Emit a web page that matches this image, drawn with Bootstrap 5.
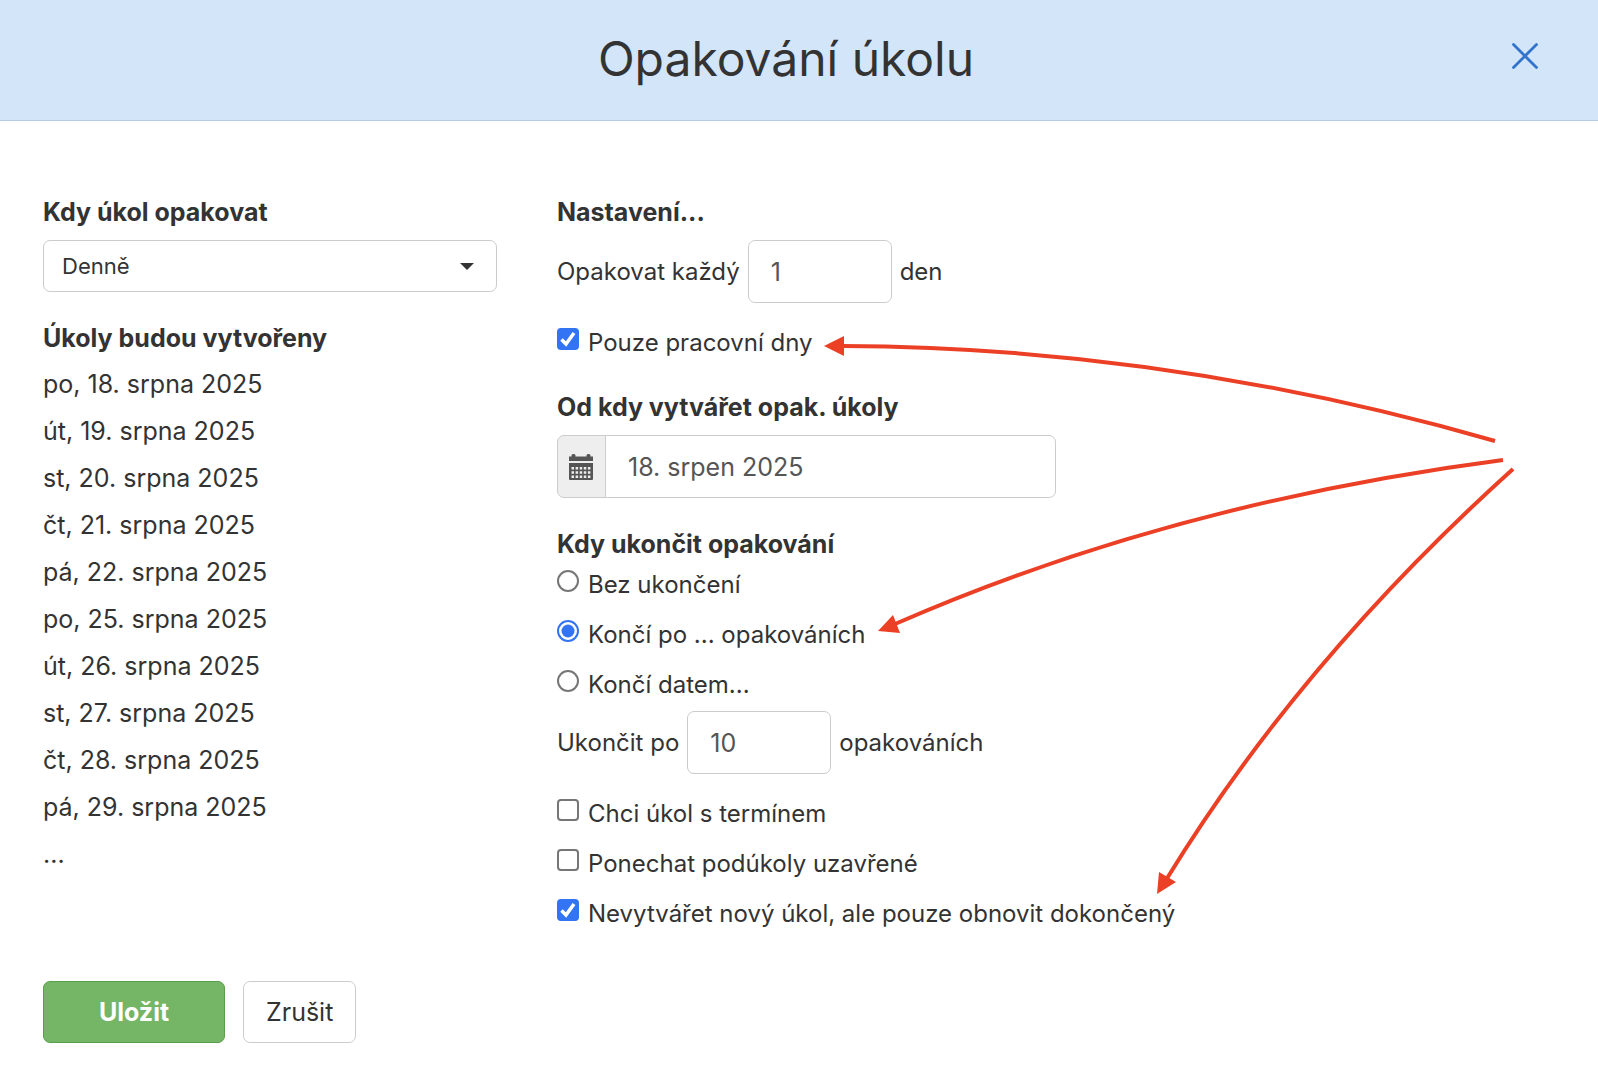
<!DOCTYPE html>
<html lang="cs">
<head>
<meta charset="utf-8">
<meta name="viewport" content="width=device-width, initial-scale=1">
<title>Opakování úkolu</title>
<link href="https://cdn.jsdelivr.net/npm/bootstrap@5.3.0/dist/css/bootstrap.min.css" rel="stylesheet">
<style>
  body { font-family: Inter, "Liberation Sans", sans-serif; font-size: 24px; line-height: 36px; color: #333; background: #fff; }
  .dialog-head { background: #d3e5f9; border-bottom: 1px solid #b3cce4; padding: 0 60px; height: 121px; }
  .dialog-title { font-size: 48px; line-height: 60px; font-weight: 400; padding-bottom: 2px; }
  .close-btn { color: #3273cb; width: 26px; height: 26px; margin-bottom: 8px; }
  .dialog-body { padding: 73px 43px 39px; }
  .columns { column-gap: 60px; }
  .schedule { width: 454px; }
  .section-title { display: block; font-size: 25px; line-height: 36px; font-weight: 700; margin-bottom: 10px; }
  .section-tight { margin-bottom: 5px; }
  .section { margin-top: 28px; }
  .form-control, .form-select, .input-group-text { border-color: #ccc; border-radius: 7px; }
  .form-control { font-size: 25px; line-height: 36px; height: 63px; padding: 0 22px; color: #555; }
  .form-select { font-size: 22px; height: 52px; padding: 0 60px 0 18px; color: #333;
    background-image: url("data:image/svg+xml,%3Csvg xmlns='http://www.w3.org/2000/svg' viewBox='0 0 14 7'%3E%3Cpath fill='%23333' d='M0 0h14L7 7z'/%3E%3C/svg%3E");
    background-size: 14px 7px; background-position: right 22px center; }
  .count-field { width: 144px; }
  .field-row { gap: 8px; }
  .date-group { width: 499px; }
  .input-group-text { width: 49px; padding: 0 2px 0 0; background: #eee; color: #555; }
  .dates { font-size: 25px; line-height: 47px; }
  .choices { gap: 14px; }
  .before-field { margin-bottom: 8px; }
  .after-field { margin-top: 22px; }
  .choice { gap: 9px; }
  .choice .form-check-input { width: 22px; height: 22px; margin: 3px 0 0; border: 2px solid #767676; }
  .choice .form-check-input[type=checkbox] { border-radius: 4px; }
  .choice .form-check-input:checked { background-color: #3374f5; border-color: #3374f5; }
  .choice .form-check-input[type=checkbox]:checked { background-size: 22px 22px;
    background-image: url("data:image/svg+xml,%3Csvg xmlns='http://www.w3.org/2000/svg' viewBox='0 0 22 22'%3E%3Cpath fill='none' stroke='%23fff' stroke-width='3.500' d='M4.500 11.500l4.500 4.500L17 5'/%3E%3C/svg%3E"); }
  .choice .form-check-input[type=radio]:checked { background-color: #fff; background-size: 18px 18px;
    background-image: url("data:image/svg+xml,%3Csvg xmlns='http://www.w3.org/2000/svg' viewBox='0 0 18 18'%3E%3Ccircle cx='9' cy='9' r='6.500' fill='%233374f5'/%3E%3C/svg%3E"); }
  .actions { margin-top: 49px; gap: 18px; }
  .actions .btn { font-size: 25px; line-height: 36px; height: 62px; border-radius: 7px; padding: 0 22px; }
  .actions .btn-save { width: 182px; background: #75b566; border-color: #5a9e4b; color: #fff; font-weight: 700; }
  .actions .btn-cancel { background: #fff; border-color: #ccc; color: #333; }
  .arrows { z-index: 5; pointer-events: none; }
</style>
<script src="https://cdn.jsdelivr.net/npm/bootstrap@5.3.0/dist/js/bootstrap.bundle.min.js"></script>
</head>
<body class="position-relative">
<header class="dialog-head d-flex align-items-center">
  <h1 class="dialog-title flex-grow-1 text-center m-0">Opakování úkolu</h1>
  <button type="button" class="close-btn btn p-0 border-0 d-flex" aria-label="Zavřít">
    <svg width="26" height="26" viewBox="0 0 26 26" fill="none" stroke="currentColor" stroke-width="2.800" stroke-linecap="round"><path d="M1.500 1.500l23 23M24.500 1.500l-23 23"/></svg>
  </button>
</header>

<form class="dialog-body">
  <div class="columns d-flex">
    <div class="schedule flex-shrink-0">
      <label class="section-title" for="freq">Kdy úkol opakovat</label>
      <select class="form-select" id="freq"><option>Denně</option></select>
      <h2 class="section-title section section-tight">Úkoly budou vytvořeny</h2>
      <ul class="dates list-unstyled m-0">
        <li>po, 18. srpna 2025</li>
        <li>út, 19. srpna 2025</li>
        <li>st, 20. srpna 2025</li>
        <li>čt, 21. srpna 2025</li>
        <li>pá, 22. srpna 2025</li>
        <li>po, 25. srpna 2025</li>
        <li>út, 26. srpna 2025</li>
        <li>st, 27. srpna 2025</li>
        <li>čt, 28. srpna 2025</li>
        <li>pá, 29. srpna 2025</li>
        <li>...</li>
      </ul>
    </div>

    <div class="flex-grow-1">
      <h2 class="section-title">Nastavení...</h2>
      <div class="field-row d-flex align-items-center">
        <label for="every">Opakovat každý</label>
        <input type="text" class="form-control count-field" id="every" value="1">
        <span>den</span>
      </div>
      <div class="choice after-field d-flex align-items-start">
        <input class="form-check-input" type="checkbox" id="workdays" checked>
        <label for="workdays">Pouze pracovní dny</label>
      </div>

      <label class="section-title section" for="from">Od kdy vytvářet opak. úkoly</label>
      <div class="input-group date-group">
        <span class="input-group-text justify-content-center">
          <svg width="24" height="26" viewBox="0 0 24 26" fill="currentColor"><path d="M0 2.500h2.500V1.500Q2.500 0 4 0h1q1.500 0 1.500 1.500v1h11v-1Q17.500 0 19 0h1q1.500 0 1.500 1.500v1H24V7H0z"/><path fill-rule="evenodd" d="M0 9h24v16q0 1-1 1H1q-1 0-1-1zM2.500 13v2.500H5V13zm4.100 0v2.500h2.500V13zm4.100 0v2.500h2.500V13zm4.100 0v2.500h2.500V13zm4.100 0v2.500h2.500V13zM2.500 17.200v2.500H5v-2.500zm4.100 0v2.500h2.500v-2.500zm4.100 0v2.500h2.500v-2.500zm4.100 0v2.500h2.500v-2.500zm4.100 0v2.500h2.500v-2.500zM2.500 21.400v2.500H5v-2.500zm4.100 0v2.500h2.500v-2.500zm4.100 0v2.500h2.500v-2.500zm4.100 0v2.500h2.500v-2.500zm4.100 0v2.500h2.500v-2.500z"/></svg>
        </span>
        <input type="text" class="form-control" id="from" value="18. srpen 2025">
      </div>

      <h2 class="section-title section section-tight">Kdy ukončit opakování</h2>
      <div class="choices before-field d-flex flex-column">
        <div class="choice d-flex align-items-start">
          <input class="form-check-input" type="radio" name="end" id="end-none">
          <label for="end-none">Bez ukončení</label>
        </div>
        <div class="choice d-flex align-items-start">
          <input class="form-check-input" type="radio" name="end" id="end-count" checked>
          <label for="end-count">Končí po ... opakováních</label>
        </div>
        <div class="choice d-flex align-items-start">
          <input class="form-check-input" type="radio" name="end" id="end-date">
          <label for="end-date">Končí datem...</label>
        </div>
      </div>
      <div class="field-row d-flex align-items-center">
        <label for="count">Ukončit po</label>
        <input type="text" class="form-control count-field" id="count" value="10">
        <span>opakováních</span>
      </div>
      <div class="choices after-field d-flex flex-column">
        <div class="choice d-flex align-items-start">
          <input class="form-check-input" type="checkbox" id="due">
          <label for="due">Chci úkol s termínem</label>
        </div>
        <div class="choice d-flex align-items-start">
          <input class="form-check-input" type="checkbox" id="subtasks">
          <label for="subtasks">Ponechat podúkoly uzavřené</label>
        </div>
        <div class="choice d-flex align-items-start">
          <input class="form-check-input" type="checkbox" id="renew" checked>
          <label for="renew">Nevytvářet nový úkol, ale pouze obnovit dokončený</label>
        </div>
      </div>
    </div>
  </div>

  <div class="actions d-flex">
    <button type="submit" class="btn btn-save">Uložit</button>
    <button type="button" class="btn btn-cancel">Zrušit</button>
  </div>
</form>

<svg class="arrows position-absolute top-0 start-0" width="1598" height="1082" viewBox="0 0 1598 1082" aria-hidden="true">
  <g fill="none" stroke="#eb4025" stroke-width="4">
    <path d="M1495 441Q1168 347 842 346"/>
    <path d="M1503 460Q1172 503 895 624"/>
    <path d="M1513 469Q1300 661 1166 880"/>
  </g>
  <g fill="#eb4025">
    <path d="M824 346l20-10v20z"/>
    <path d="M878 631l15-16 7 18z"/>
    <path d="M1157 894l2-22 17 10z"/>
  </g>
</svg>
</body>
</html>
